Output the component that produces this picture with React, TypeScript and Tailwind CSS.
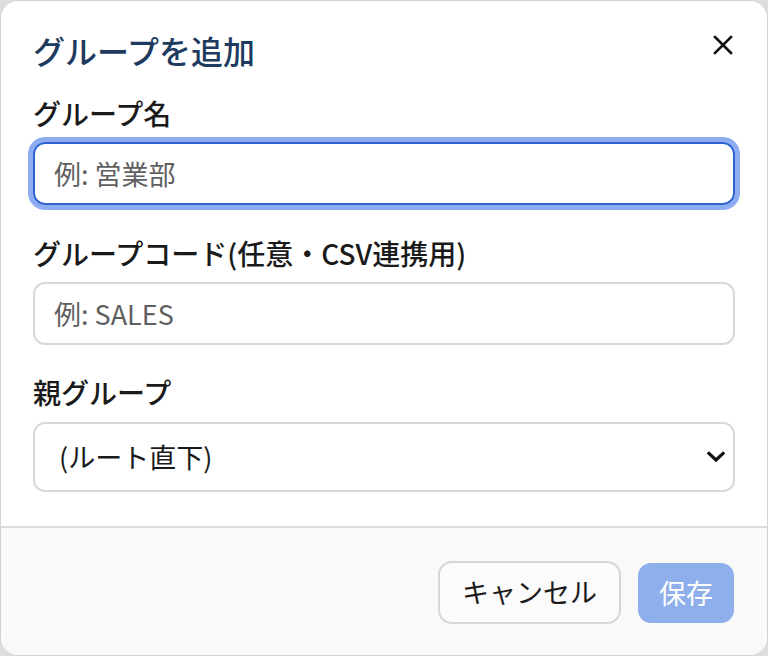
import React from 'react';

const font = { fontFamily: '"Noto Sans CJK JP", "Noto Sans", sans-serif' };

const ChevronDown = () => (
  <svg width="20" height="12" viewBox="0 0 20 12" className="pointer-events-none absolute right-[9px] top-1/2 -translate-y-1/2">
    <path d="M3 2.5 L10 9 L17 2.5" fill="none" stroke="#111" strokeWidth="3.2" strokeLinecap="square" />
  </svg>
);

const App: React.FC = () => {
  return (
    <div className="w-[768px] h-[656px] bg-[#dedede]" style={font}>
      <div className="h-full flex flex-col rounded-[18px] border border-[#d2d2d2] bg-white overflow-hidden">
        {/* Header */}
        <div className="flex items-center justify-between pl-[32px] pr-[30px] pt-[29px]">
          <h2 className="text-[32px] leading-[40px] font-medium text-[#1e3a5f]">グループを追加</h2>
          <button className="w-[28px] h-[28px] flex items-center justify-center -mt-[10px]" aria-label="閉じる">
            <svg width="20" height="20" viewBox="0 0 20 20">
              <path d="M2 2 L18 18 M18 2 L2 18" stroke="#111" strokeWidth="2.6" strokeLinecap="square" />
            </svg>
          </button>
        </div>

        {/* Body */}
        <div className="flex flex-col px-[32px] pt-[25px]">
          <label className="text-[28px] leading-[36px] font-medium text-[#1a1a1a]">グループ名</label>
          <input
            className="mt-[11px] h-[63px] w-full rounded-[12px] border-2 border-[#2f63d3] px-[19px] text-[27px] text-[#222] outline-none ring-[5px] ring-[#8dadf0] placeholder:text-[#5f5f5f]"
            placeholder="例: 営業部"
          />

          <label className="mt-[30px] text-[28px] leading-[36px] font-medium text-[#1a1a1a]">
            グループコード(任意・CSV連携用)
          </label>
          <input
            className="mt-[11px] h-[63px] w-full rounded-[12px] border-2 border-[#d8d8d8] px-[19px] text-[27px] text-[#222] outline-none placeholder:text-[#5f5f5f]"
            placeholder="例: SALES"
          />

          <label className="mt-[29px] text-[28px] leading-[36px] font-medium text-[#1a1a1a]">親グループ</label>
          <div className="relative mt-[12px]">
            <select className="h-[70px] w-full appearance-none rounded-[12px] border-2 border-[#d8d8d8] bg-white pl-[24px] text-[27px] text-[#1a1a1a] outline-none">
              <option>(ルート直下)</option>
            </select>
            <ChevronDown />
          </div>
        </div>

        {/* Footer */}
        <div className="mt-[34px] flex-1 border-t-2 border-[#dcdcdc] bg-[#f9f9f9] flex justify-end items-start gap-[17px] pt-[33px] pr-[33px]">
          <button className="h-[63px] w-[183px] rounded-[14px] border-2 border-[#d6d6d6] bg-[#fbfbfb] text-[27px] text-[#1a1a1a]">
            キャンセル
          </button>
          <button className="mt-[2px] h-[60px] w-[96px] rounded-[13px] bg-[#8eaeec] text-[27px] text-white" disabled>
            保存
          </button>
        </div>
      </div>
    </div>
  );
};

export default App;
